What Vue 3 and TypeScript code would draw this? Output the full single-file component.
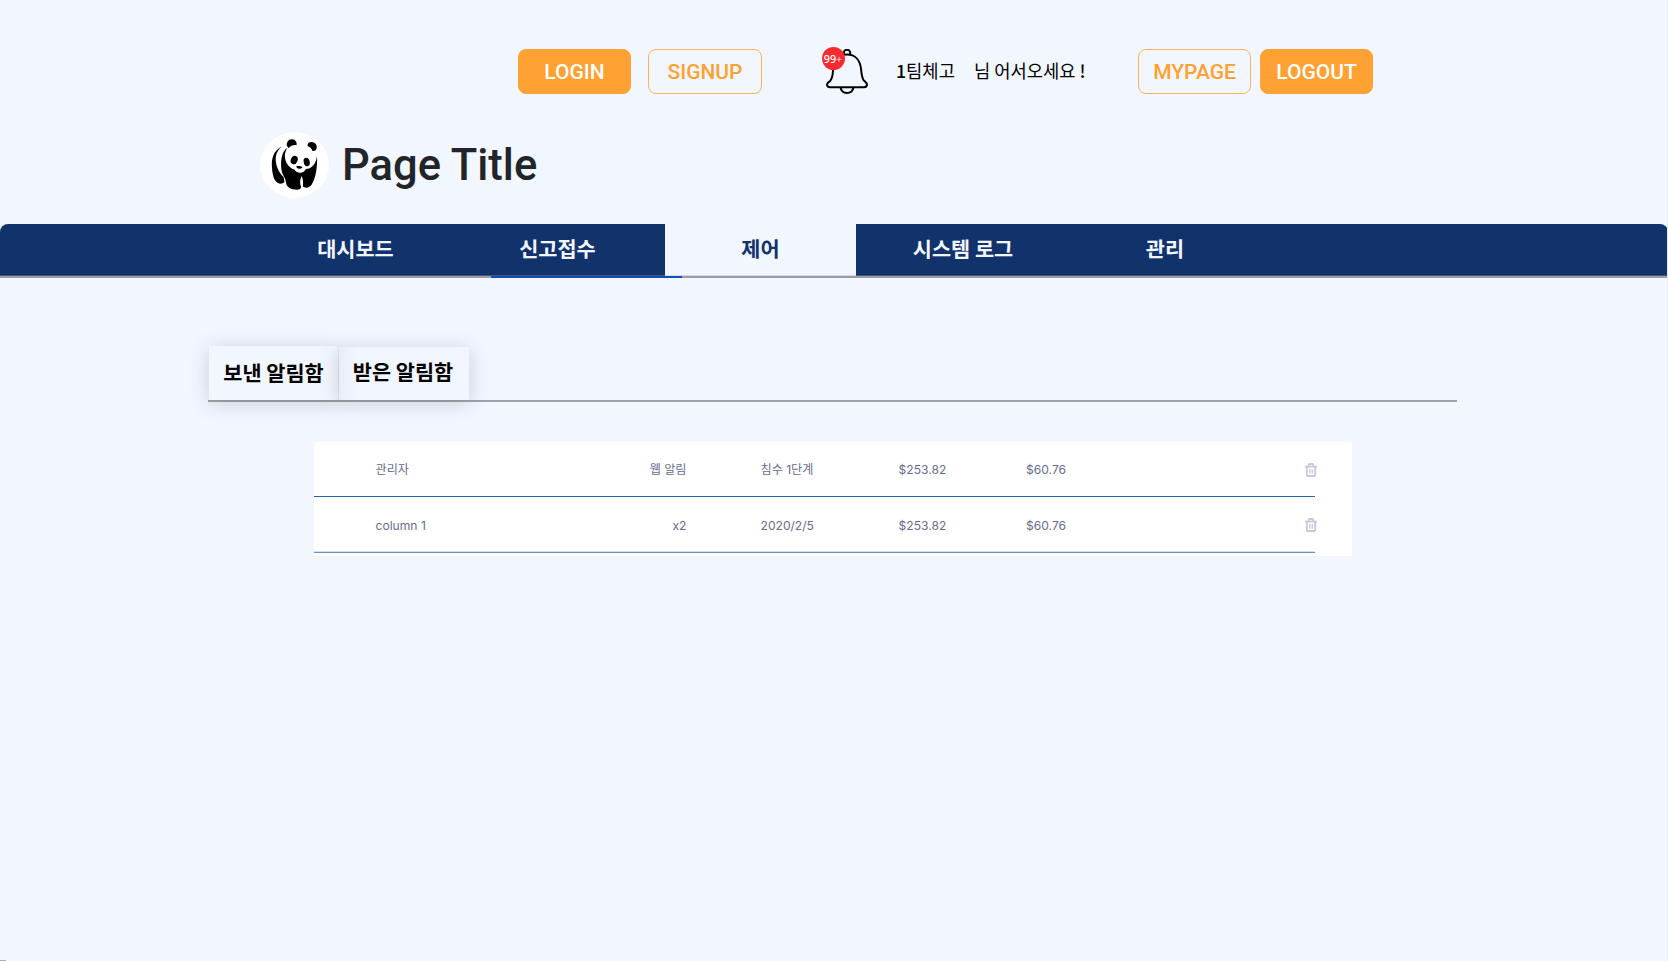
<script setup lang="ts">
interface NavItem {
  label: string
  key: string
}

interface AlertRow {
  name: string
  kind: string
  detail: string
  first: string
  second: string
}

const navItems: NavItem[] = [
  { label: '대시보드', key: 'dashboard' },
  { label: '신고접수', key: 'report' },
  { label: '제어', key: 'control' },
  { label: '시스템 로그', key: 'log' },
  { label: '관리', key: 'manage' },
]

const rows: AlertRow[] = [
  { name: '관리자', kind: '웹 알림', detail: '침수 1단계', first: '$253.82', second: '$60.76' },
  { name: 'column 1', kind: 'x2', detail: '2020/2/5', first: '$253.82', second: '$60.76' },
]
</script>

<template>
  <div class="page">
    <header class="toolbar">
      <button class="btn filled login">LOGIN</button>
      <button class="btn outlined signup">SIGNUP</button>
      <div class="bell">
        <svg width="42" height="46" viewBox="0 0 42 46" fill="none" stroke="#000" stroke-width="2">
          <circle cx="21" cy="4" r="3.3" />
          <path
            d="M21 5.5C12 5.5 7.6 12.5 7.1 20.5C6.8 25.5 6.8 28.5 4.4 31.7C2.8 33.1 1 34 1 35.6C1 37.3 2.2 38.2 4 38.2H38C39.8 38.2 41 37.3 41 35.6C41 34 39.2 32.7 37.6 31.1C35.6 28 35.6 24.5 35 19.5C34 11.7 29.5 5.5 21 5.5Z"
            fill="#f2f6ff"
          />
          <path d="M14.5 38.2C15 42 17.5 44 21 44C24.5 44 27 42 27.5 38.2" />
        </svg>
        <span class="badge">99<i>+</i></span>
      </div>
      <p class="user"><b>1</b>팀체고</p>
      <p class="greeting">님 어서오세요 <b>!</b></p>
      <button class="btn outlined mypage">MYPAGE</button>
      <button class="btn filled logout">LOGOUT</button>
    </header>

    <div class="brand">
      <svg class="logo" width="69" height="66" viewBox="0 0 69 66">
        <ellipse cx="34.5" cy="33" rx="34.5" ry="33" fill="#fff" />
        <path
          d="M22 14.5C14 18 11 26 12 36C12.5 43 14 49 18 51C20 52.3 23 51.5 24.5 50L23.5 45C19 41 15 33 15.8 25C16.5 20 19 16.5 22 14.5Z"
        />
        <path
          d="M27.5 15.5C21 20 20.5 30 21.5 38C22.3 43 25.5 46 26 50C26 54 29 57 35 57.6C39 58 41.3 57.2 41 54.5C39.5 51 40 47.5 41.5 44C43.5 47 43 51 43 54.5C45 56.5 50 56 52 52C56 45 57.5 35 57 24C56 32 52 36.5 46 37C43 42 36 41 34.5 37.5C28 36 24 28 25 22C25.5 19 26.3 17.5 27.5 15.5Z"
        />
        <path
          d="M27 14C26 10.5 28.5 7 32 7.2C35.5 7.4 37.3 10.3 36.5 13.2C33.5 12.7 30.5 13.7 28.8 16.3Z"
        />
        <path
          d="M47.5 14C47.3 11.5 49 10 51.5 10C55 10 57.3 13 56.7 16C56.2 18.5 54 19.5 52.3 18.7C51.8 16.5 50 14.8 47.5 14Z"
        />
        <ellipse cx="34.2" cy="28" rx="3.4" ry="4.3" transform="rotate(22 34.2 28)" />
        <ellipse cx="46.7" cy="30" rx="3" ry="4.3" transform="rotate(-14 46.7 30)" />
        <path d="M36 34.5C38 33.6 41 34 42.5 35.3C41 37.5 37.5 37.3 36 34.5Z" />
        <path d="M34.5 37.5C37 39.3 42 39.5 45 38.2C43 41.7 37 41.3 34.5 37.5Z" fill="#fff" />
      </svg>
      <h1>Page Title</h1>
    </div>

    <nav class="nav">
      <a v-for="item in navItems" :key="item.key" :class="['item', item.key]">{{ item.label }}</a>
      <span class="underline"></span>
      <span class="marker"></span>
    </nav>

    <main>
      <div class="tabs">
        <button class="tab sent">보낸 알림함</button>
        <button class="tab received">받은 알림함</button>
      </div>

      <section class="card">
        <div v-for="row in rows" :key="row.name" class="row">
          <span class="name">{{ row.name }}</span>
          <span class="kind">{{ row.kind }}</span>
          <span class="detail">{{ row.detail }}</span>
          <span class="first">{{ row.first }}</span>
          <span class="second">{{ row.second }}</span>
          <svg width="12" height="14" viewBox="0 0 12 14" fill="none" stroke="#c6c8db" stroke-width="1.8">
            <path d="M0 3.6H12M3.7 3V1.9Q3.7 1 4.6 1H7.4Q8.3 1 8.3 1.9V3M1.8 3.5V12Q1.8 13 2.8 13H9.2Q10.2 13 10.2 12V3.5" />
            <path d="M4.8 6V10.7M7.2 6V10.7" stroke-width="1.3" />
          </svg>
        </div>
      </section>
    </main>
    <span class="corner"></span>
  </div>
</template>

<style>
body {
  background: #f2f6ff;
  overflow: hidden;
}
</style>

<style scoped>
.page {
  position: relative;
  box-sizing: border-box;
  width: 1668px;
  height: 961px;
  overflow: hidden;
  border-right: 1px solid #e5eaf4;
  background: #f2f6ff;
  font-family: Roboto, "Noto Sans CJK KR", sans-serif;
}

.toolbar {
  display: flex;
  height: 45px;
  padding: 49px 0 0 518px;
}

.btn {
  box-sizing: border-box;
  width: 113px;
  height: 45px;
  padding: 1px 0 0;
  border: 1px solid #ffa133;
  border-radius: 8px;
  font: 500 21px/42px Roboto, sans-serif;
  text-align: center;
}

.filled {
  background: #ffa133;
  color: #fff;
}

.outlined {
  background: transparent;
  border-color: #ffb05a;
  color: #ffa133;
}

.signup {
  width: 114px;
  margin-left: 17px;
}

.bell {
  position: relative;
  width: 42px;
  height: 46px;
  margin-left: 64px;
}

.bell svg {
  display: block;
}

.badge {
  position: absolute;
  top: -2px;
  left: -4px;
  width: 23px;
  height: 23px;
  border-radius: 50%;
  background: #f42c30;
  color: #fff;
  font: 500 10.8px/24px "Noto Sans", sans-serif;
  text-align: center;
  text-indent: -1px;
  white-space: nowrap;
}

.badge i {
  font-style: normal;
  font-weight: 300;
}

.user,
.greeting {
  margin: 0;
  font: 400 17.7px/42px "Noto Sans CJK KR", sans-serif;
  color: #000;
  white-space: nowrap;
}

.user b,
.greeting b {
  font-weight: 500;
}

.user {
  width: 78px;
  margin-left: 28px;
}

.greeting {
  width: 164px;
}

.logout {
  margin-left: 9px;
}

.brand {
  display: flex;
  height: 66px;
  margin: 38px 0 0 260px;
}

.brand h1 {
  margin: 0 0 0 13px;
  font: 500 43.5px/67px Roboto, sans-serif;
  color: #212529;
  white-space: nowrap;
}

.nav {
  position: relative;
  display: flex;
  width: 1668px;
  height: 52px;
  margin-top: 26px;
  border-radius: 8px 8px 0 0;
  background: #12326c;
  box-sizing: border-box;
  padding-left: 246px;
}

.item {
  height: 52px;
  color: #f2f6ff;
  font: 700 20.8px/49px "Noto Sans CJK KR", sans-serif;
  text-align: center;
  white-space: nowrap;
}

.dashboard {
  width: 219px;
}

.report {
  width: 185px;
  margin-right: 15px;
}

.control {
  width: 191px;
  background: #f2f6ff;
  color: #12326c;
}

.log {
  width: 214px;
}

.manage {
  width: 190px;
}

.underline,
.marker {
  position: absolute;
  top: 52px;
  left: 0;
  width: 1668px;
  height: 2px;
  background: #9c9ea2;
}

.underline {
  box-shadow: 0 -1px rgba(156, 158, 162, 0.35);
}

.marker {
  left: 491px;
  width: 191px;
  background: #1250b4;
}

.tabs {
  display: flex;
  gap: 1px;
  align-items: flex-end;
  width: 1248px;
  height: 54px;
  margin: 70px 0 0 208px;
  padding-left: 1px;
  border-bottom: 2px solid #9fa2a8;
}

.tab {
  width: 129px;
  height: 54px;
  padding: 0 0 2px;
  border: 0;
  border-radius: 2px;
  background: #f2f6ff;
  box-shadow: 0 3px 20px rgba(60, 65, 70, 0.22);
  color: #000;
  font: 700 20.8px/52px "Noto Sans CJK KR", sans-serif;
  white-space: nowrap;
}

.received {
  width: 130px;
  height: 53px;
  padding: 0 2px 4px 0;
  line-height: 49px;
  background: linear-gradient(90deg, #e8edf6, #f2f6ff 18px);
}

.card {
  box-sizing: border-box;
  width: 1038px;
  height: 114px;
  margin: 40px 0 0 314px;
  border-radius: 3px 3px 0 0;
  background: #fff;
}

.row {
  box-sizing: border-box;
  display: grid;
  grid-template-columns: 162px 149px 74px 138px 127.5px 278.5px 12px;
  align-items: center;
  width: 1001px;
  height: 55px;
  padding: 1px 0 0 61.5px;
  border-bottom: 1px solid #2e60a9;
  color: #686d8c;
  font: 400 12.1px/18px Inter, "Noto Sans CJK KR", sans-serif;
  white-space: nowrap;
}

.row + .row {
  height: 56px;
  padding-top: 2px;
  border-bottom: 1px solid #6a8fcd;
  box-shadow: inset 0 -1px #d3dff2;
}

.row + .row svg {
  margin-bottom: 1px;
}

.kind {
  text-align: right;
}

.detail {
  grid-column: 4;
}

.corner {
  position: absolute;
  bottom: 0;
  left: 0;
  width: 6px;
  height: 1px;
  background: #a8abb0;
}
</style>
